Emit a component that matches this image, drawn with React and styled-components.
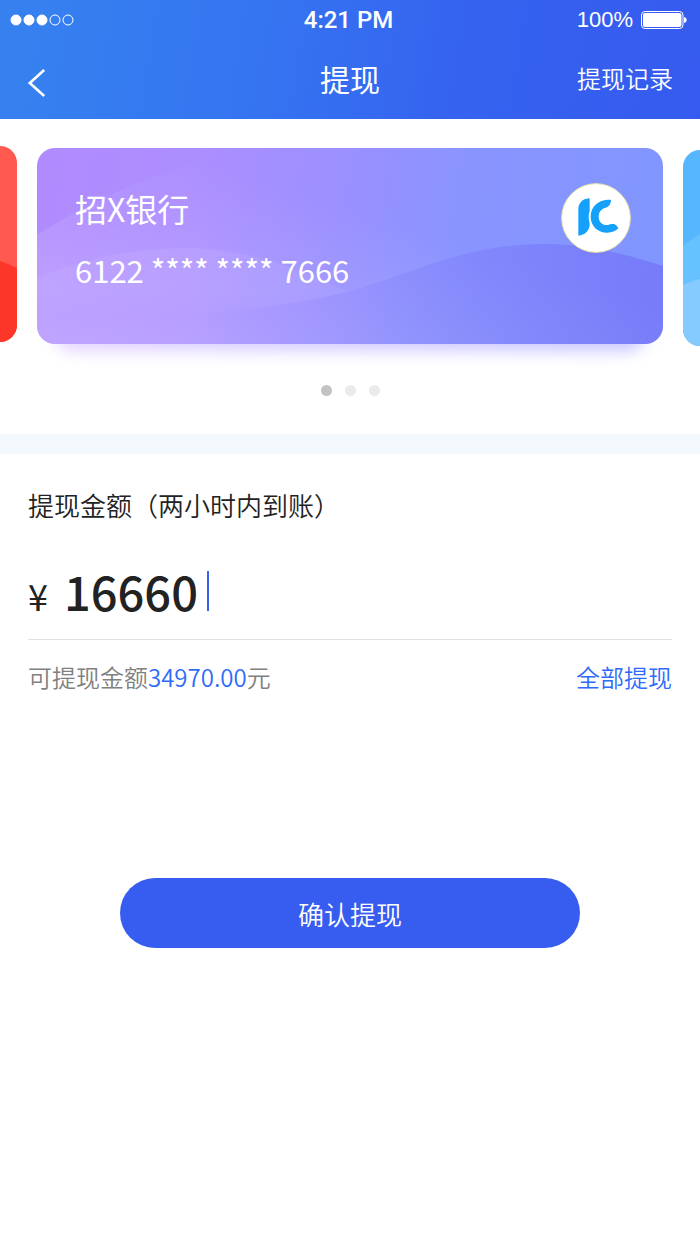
import React, { useState } from 'react';
import styled, { createGlobalStyle } from 'styled-components';

const App = () => {
  const [amount, setAmount] = useState('16660');
  const balance = '34970.00';

  return(<>
    <GlobalStyle />
    <Header>
      <StatusBar>
        <Signal />
        <Clock>4:21 PM</Clock>
        <Power>
          <span>100%</span>
          <Battery />
        </Power>
      </StatusBar>
      <NavBar>
        <BackButton type="button" aria-label="返回">
          <svg width="20" height="40" viewBox="0 0 20 40" fill="none">
            <path d="M17.2 12 L2.8 25 L17.2 38" stroke="#FFF" strokeWidth="2.6" />
          </svg>
        </BackButton>
        <Title>提现</Title>
        <RecordLink href="#records">提现记录</RecordLink>
      </NavBar>
    </Header>

    <main>
      <CardSection>
        <Carousel>
          <SideCard $align="flex-start" $side="left">
            <RedWaves />
          </SideCard>
          <BankCard>
            <CardFace>
              <PurpleWaves />
              <CardText>
                <BankName>招X银行</BankName>
                <CardNumber>6122 **** **** 7666</CardNumber>
              </CardText>
              <BankLogo />
            </CardFace>
          </BankCard>
          <SideCard $align="flex-end" $side="right">
            <BlueWaves />
          </SideCard>
        </Carousel>
        <Dots>
          <Dot $active />
          <Dot />
          <Dot />
        </Dots>
      </CardSection>

      <Form onSubmit={(e) => e.preventDefault()}>
        <Label htmlFor="amount">提现金额（两小时内到账）</Label>
        <AmountRow>
          <Currency>¥</Currency>
          <AmountInput
            id="amount"
            inputMode="numeric"
            autoComplete="off"
            value={amount}
            onChange={(e) => setAmount(e.target.value)}
          />
          <Caret />
        </AmountRow>
        <BalanceRow>
          <Balance>可提现金额<strong>{balance}</strong>元</Balance>
          <AllButton type="button" onClick={() => setAmount(balance)}>全部提现</AllButton>
        </BalanceRow>
        <SubmitButton type="submit">确认提现</SubmitButton>
      </Form>
    </main>
  </>);
};

const Signal = () => (
  <svg width="64" height="12" viewBox="0 0 64 12" fill="none" stroke="#FFF">
    <circle cx="6" cy="6" r="5" fill="#FFF" />
    <circle cx="19" cy="6" r="5" fill="#FFF" />
    <circle cx="32" cy="6" r="5" fill="#FFF" />
    <circle cx="45" cy="6" r="5" />
    <circle cx="58" cy="6" r="5" />
  </svg>
);

const Battery = () => (
  <svg width="46" height="18" viewBox="0 0 46 18">
    <rect x="0.5" y="0.5" width="41.5" height="17" rx="3.5" fill="none" stroke="#FFF" />
    <rect x="2" y="2" width="38.5" height="14" rx="2" fill="#FFF" />
    <path d="M43 6 C46.5 6.5 46.5 11.5 43 12 Z" fill="#FFF" />
  </svg>
);

const PurpleWaves = () => (
  <Waves viewBox="0 0 625 196" preserveAspectRatio="none">
    <defs>
      <linearGradient id="light" x1="0" y1="1" x2="1" y2="0">
        <stop offset="0" stopColor="#FFF" stopOpacity="0.21" />
        <stop offset="0.6" stopColor="#FFF" stopOpacity="0" />
      </linearGradient>
      <linearGradient id="crest" x1="0" y1="0" x2="0" y2="1">
        <stop offset="0" stopColor="#FFF" stopOpacity="0.07" />
        <stop offset="0.6" stopColor="#FFF" stopOpacity="0.05" />
        <stop offset="1" stopColor="#FFF" stopOpacity="0" />
      </linearGradient>
      <linearGradient id="dark" x1="0" y1="0" x2="1" y2="0">
        <stop offset="0" stopColor="#6A5CF0" stopOpacity="0" />
        <stop offset="0.35" stopColor="#6A5CF0" stopOpacity="0.1" />
        <stop offset="1" stopColor="#6A5CF0" stopOpacity="0.45" />
      </linearGradient>
    </defs>
    <path d="M0 87 C50 55 110 28 163 13 C185 6 205 2 225 0 H625 V196 H0 Z" fill="url(#light)" />
    <path d="M0 130 C60 106 105 100 150 100 C215 101 262 122 310 144 C260 156 210 164 150 166 C90 168 40 168 0 168 Z" fill="url(#crest)" />
    <path d="M150 166 C210 163 262 156 310 144 C380 124 425 96 508 96 C552 96 590 107 625 118 V196 H150 Z" fill="url(#dark)" />
  </Waves>
);

const RedWaves = () => (
  <Waves viewBox="0 0 18 196" preserveAspectRatio="none">
    <rect width="18" height="196" fill="#FF5950" />
    <path d="M0 115 Q9 118 18 122 V196 H0 Z" fill="#FC3628" />
  </Waves>
);

const BlueWaves = () => (
  <Waves viewBox="0 0 18 196" preserveAspectRatio="none">
    <rect width="18" height="196" fill="#56B7FF" />
    <path d="M0 96 Q9 89 18 84 V196 H0 Z" fill="#66C1FF" />
    <path d="M0 135 Q9 131 18 129 V196 H0 Z" fill="#86CBFF" />
  </Waves>
);

const BankLogo = () => (
  <LogoMark width="70" height="70" viewBox="0 0 210 210">
    <circle cx="105" cy="105" r="103" fill="#FFF" stroke="#EEE9A6" strokeWidth="3" />
    <g fill="#15A0FB">
      <path d="M52 79 C52 60 64 48 84 46 Q86 46 86 50 V84 C82 96 82 108 86 120 C87 143 72 157 52 158 Z" />
      <path d="M148 50 C151 50 150 54 149 58 C147 67 142 72 134 74 C120 77 113 88 113 101 C113 116 124 127 139 126 C147 125 154 122 161 124 C166 126 169 130 172 136 C164 145 152 149 139 149 C109 149 89 128 89 101 C89 71 111 51 140 50 Z" />
    </g>
  </LogoMark>
);

const GlobalStyle = createGlobalStyle`
  * { box-sizing: border-box; }
  body {
    margin: 0;
    background-color: #FFF;
    color: #222;
    font-family: "Noto Sans CJK SC", sans-serif;
  }
  svg { display: block; flex-shrink: 0; }
  button, input {
    padding: 0;
    border: 0;
    background: none;
    color: inherit;
    font: inherit;
  }
  button { cursor: pointer; }
`;

const lightFont = '"Noto Sans CJK SC DemiLight", "Noto Sans CJK SC", sans-serif';

const Header = styled.header`
  color: #FFF;
  background: linear-gradient(100deg, #3682EF 0%, #3574F1 38%, #3563EF 65%, #365AEF 100%);
`;
const StatusBar = styled.div`
  display: grid;
  grid-template-columns: 1fr auto 1fr;
  align-items: center;
  height: 39px;
  padding: 0 13px 0 10px;
`;
const Clock = styled.span`
  font: 500 24px Roboto, sans-serif;
`;
const Power = styled.div`
  display: flex;
  justify-content: flex-end;
  align-items: center;
  gap: 8px;
  font: 22px "Liberation Sans", sans-serif;
`;
const NavBar = styled.nav`
  display: grid;
  grid-template-columns: 1fr auto 1fr;
  align-items: center;
  height: 80px;
  padding: 0 27px 2px;
`;
const BackButton = styled.button`
  justify-self: start;
`;
const Title = styled.h1`
  margin: 0;
  font-size: 30px;
  font-weight: 400;
  line-height: 40px;
`;
const RecordLink = styled.a`
  justify-self: end;
  color: #FFF;
  font-family: ${lightFont};
  font-size: 24px;
  font-weight: 350;
  line-height: 36px;
  text-decoration: none;
`;

const CardSection = styled.section`
  padding: 27px 0 38px;
  border-bottom: 20px solid #F4F9FD;
`;
const Carousel = styled.div`
  display: flex;
  gap: 20px;
  height: 200px;
`;
const SideCard = styled.div`
  align-self: ${({ $align }) => $align};
  position: relative;
  width: 17px;
  height: 196px;
  overflow: hidden;
  border-radius: ${({ $side }) => ($side === 'left' ? '0 18px 18px 0' : '18px 0 0 18px')};
`;
const BankCard = styled.article`
  position: relative;
  z-index: 0;
  flex: 1;
  align-self: center;
  &::after {
    content: "";
    position: absolute;
    z-index: -1;
    inset: 60px 18px -7px;
    border-radius: 18px;
    background: linear-gradient(90deg, #C9A8FF, #8A8CFF);
    filter: blur(8px);
    opacity: 0.5;
  }
`;
const CardFace = styled.div`
  position: relative;
  display: flex;
  justify-content: space-between;
  align-items: flex-start;
  height: 196px;
  padding: 35px 32px 0 38px;
  overflow: hidden;
  border-radius: 18px;
  color: #FFF;
  background: linear-gradient(100deg, #B08BFF 0%, #AC8EFF 25%, #9A90FF 48%, #8A94FF 65%, #8096FF 100%);
`;
const Waves = styled.svg`
  position: absolute;
  inset: 0;
  width: 100%;
  height: 100%;
`;
const LogoMark = styled.svg`
  position: relative;
`;
const CardText = styled.div`
  position: relative;
`;
const BankName = styled.h2`
  margin: 0;
  font-size: 32px;
  font-weight: 400;
  line-height: 50px;
`;
const CardNumber = styled.p`
  margin: 12px 0 0;
  font-size: 31px;
  line-height: 50px;
`;
const Dots = styled.div`
  display: flex;
  justify-content: center;
  gap: 13px;
  margin-top: 39px;
`;
const Dot = styled.span`
  width: 11px;
  height: 11px;
  border-radius: 50%;
  background-color: ${({ $active }) => ($active ? '#C3C3C3' : '#EBEBEB')};
`;

const Form = styled.form`
  padding: 31px 28px;
`;
const Label = styled.label`
  display: block;
  font-family: ${lightFont};
  font-size: 26px;
  font-weight: 350;
  line-height: 40px;
`;
const AmountRow = styled.div`
  display: flex;
  align-items: baseline;
  margin-top: 33px;
  padding-bottom: 17px;
  border-bottom: 1px solid #E2E2E2;
`;
const Currency = styled.span`
  margin-right: 16px;
  font-size: 36px;
  line-height: 50px;
`;
const AmountInput = styled.input`
  field-sizing: content;
  height: 64px;
  outline: none;
  caret-color: #3660EE;
  font-size: 47px;
  font-weight: 500;
`;
const Caret = styled.span`
  width: 2px;
  height: 40px;
  margin-left: 9px;
  background-color: #3660EE;
`;
const BalanceRow = styled.div`
  display: flex;
  justify-content: space-between;
  margin-top: 19px;
  font-size: 24px;
  line-height: 36px;
`;
const Balance = styled.p`
  margin: 0;
  color: #808080;
  font-family: ${lightFont};
  font-weight: 350;
  strong {
    color: #2F6BFA;
    font-weight: 350;
  }
`;
const AllButton = styled.button`
  color: #2F6BFA;
  font-family: ${lightFont};
`;
const SubmitButton = styled.button`
  display: block;
  width: calc(100% - 184px);
  height: 70px;
  margin: 183px auto 0;
  border-radius: 35px;
  background-color: #375DF0;
  color: #FFF;
  font-family: ${lightFont};
  font-size: 26px;
`;

export default App;
